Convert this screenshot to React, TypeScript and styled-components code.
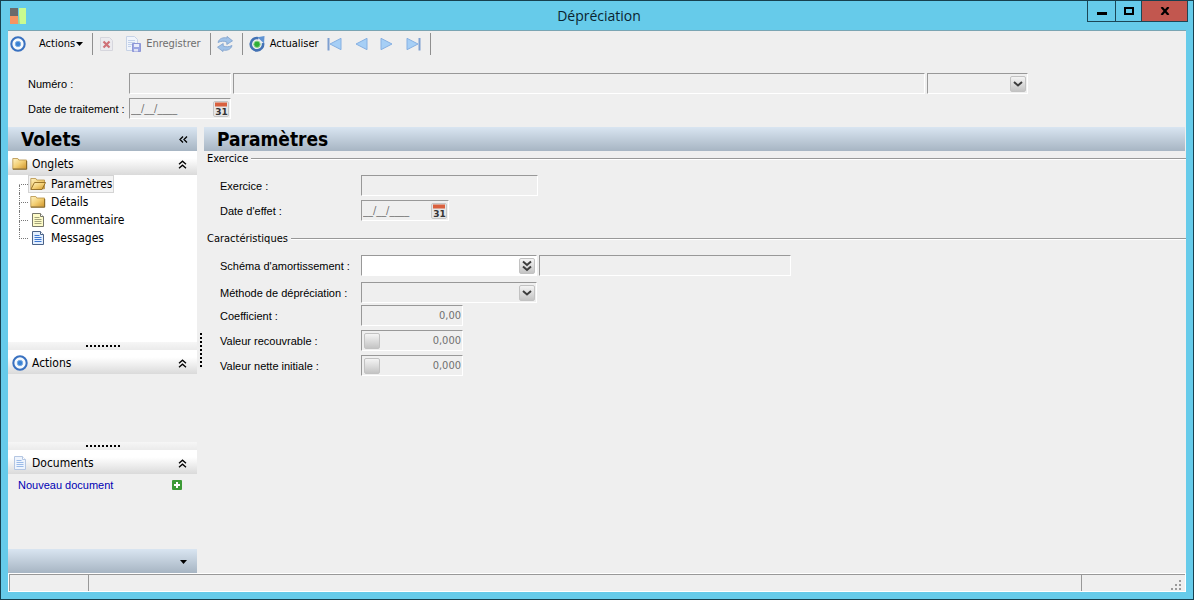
import React from "react";
import styled, { createGlobalStyle, css } from "styled-components";

const ui = `"DejaVu Sans Condensed", "Noto Sans", sans-serif`;
const form = `"Liberation Sans", Arial, sans-serif`;

const GlobalStyle = createGlobalStyle`
  *, *::before, *::after { box-sizing: border-box; }
  body { margin: 0; background: #66cbea; color: #000; font: 11px/16px ${form}; }
  button, input, select { font: inherit; color: inherit; margin: 0; padding: 0; border: 0; background: none; border-radius: 0; }
  svg { display: block; flex: none; }
  ul { list-style: none; margin: 0; padding: 0; }
  h1, h2, h3 { margin: 0; font-weight: normal; }
`;

const Window = styled.div`
  display: flex;
  flex-direction: column;
  min-height: 100vh;
  border: 1px solid #17404f;
  background: #66cbea;
`;

const TitleBar = styled.header`
  display: grid;
  grid-template-columns: 1fr auto 1fr;
  align-items: center;
  height: 29px;
  padding: 0 5px 0 9px;
`;

const WindowTitle = styled.h1`
  font: 14px/20px "Open Sans", "Noto Sans", sans-serif;
  color: #0a2430;
`;

const WindowButtons = styled.div`
  display: flex;
  align-self: start;
  justify-self: end;
`;

const WindowButton = styled.button<{ $width: number; $close?: boolean }>`
  display: grid;
  place-items: center;
  width: ${(p) => p.$width}px;
  height: 21px;
  border: solid #1b4656;
  border-width: 0 0 1px 1px;
  background: ${(p) => (p.$close ? "#c2574f" : "transparent")};
  &:last-child { border-right-width: 1px; }
`;

const Client = styled.div`
  display: flex;
  flex-direction: column;
  flex: 1;
  margin: 0 7px 7px;
  border-top: 1px solid #7aa5b3;
  background: #efefef;
`;

const Toolbar = styled.div`
  display: flex;
  align-items: center;
  height: 26px;
  font: 11px/16px ${ui};
`;

const ToolGroup = styled.div<{ $gap?: number }>`
  display: flex;
  align-items: center;
  gap: ${(p) => p.$gap ?? 10}px;
  height: 22px;
  padding: 0 9px 0 6px;
  border-right: 1px solid #8f8f8f;
  &:first-child { padding-left: 2px; }
`;

const Pager = styled.div`
  display: flex;
  gap: 10px;
`;

const ToolButton = styled.button`
  display: flex;
  align-items: center;
  gap: 5px;
  height: 20px;
  white-space: nowrap;
  &:disabled { color: #6d6d6d; }
`;

const MenuButton = styled(ToolButton)`
  gap: 1px;
  padding-left: 3px;
`;

const Heading = styled.div`
  display: grid;
  row-gap: 4px;
  padding: 16px 158px 8px 20px;
`;

const Body = styled.div`
  display: flex;
  flex: 1;
`;

const Row = styled.div<{ $label: number }>`
  display: grid;
  grid-template-columns: ${(p) => p.$label}px minmax(0, 1fr);
  align-items: center;
`;

const Fields = styled.div`
  display: flex;
  gap: 2px;
`;

const Box = styled.div<{ $width?: number; $open?: boolean }>`
  display: grid;
  grid-template-columns: auto minmax(0, 1fr) auto;
  align-items: center;
  height: 21px;
  ${(p) => (p.$width ? css`width: ${p.$width}px;` : css`flex: 1; min-width: 0;`)}
  border: 1px solid;
  border-color: #989898 #fff #fff #989898;
  background: ${(p) => (p.$open ? "#fff" : "#efefef")};
`;

const TextInput = styled.input<{ $number?: boolean }>`
  grid-row: 1;
  grid-column: 2;
  width: 100%;
  height: 19px;
  padding: 0 1px;
  outline: none;
  color: #6f6f6f;
  text-align: ${(p) => (p.$number ? "right" : "left")};
  font-family: ${ui};
`;

const Select = styled.select`
  grid-row: 1;
  grid-column: 1 / -1;
  width: 100%;
  height: 19px;
  appearance: none;
  outline: none;
`;

const chip = css`
  display: grid;
  place-items: center;
  width: 16px;
  height: 16px;
  border: 1px solid #c2c2c2;
  border-radius: 2px;
  background: linear-gradient(#f4f4f4, #c4c4c4);
`;

const SelectArrow = styled.span`
  ${chip}
  grid-row: 1;
  grid-column: 3;
  margin-right: 1px;
  pointer-events: none;
`;

const ChipButton = styled.button<{ $end?: boolean }>`
  ${chip}
  grid-row: 1;
  grid-column: ${(p) => (p.$end ? 3 : 1)};
  margin: ${(p) => (p.$end ? "0 1px 0 0" : "0 0 0 2px")};
`;

const CalendarButton = styled.button`
  grid-row: 1;
  grid-column: 3;
  margin-right: 1px;
`;

const Side = styled.aside`
  display: flex;
  flex-direction: column;
  width: 189px;
  font: 12px/18px ${ui};
`;

const bar = css`
  display: flex;
  align-items: center;
  flex: none;
  height: 24px;
  background: linear-gradient(#d9e5f1, #a7b5c3);
`;

const Banner = styled.div`
  ${bar}
  justify-content: space-between;
  padding: 0 9px 0 13px;
`;

const BannerTitle = styled.h2`
  font: bold 19px/24px ${ui};
`;

const SideFooter = styled.div`
  ${bar}
  justify-content: flex-end;
  padding: 2px 10px 0 0;
`;

const PanelHeader = styled.div`
  display: flex;
  align-items: center;
  flex: none;
  gap: 4px;
  height: 24px;
  padding: 2px 10px 0 4px;
  background: linear-gradient(#fff 30%, #dadada);
`;

const PanelTitle = styled.h3`
  flex: 1;
  font-size: 12px;
`;

const PanelBody = styled.div<{ $height: number; $tree?: boolean }>`
  min-height: ${(p) => p.$height}px;
  ${(p) => p.$tree && css`flex: 1; background: #fff;`}
`;

const Grip = styled.div`
  display: grid;
  place-items: center;
  flex: none;
  height: 8px;
  background: linear-gradient(#f6f6f6, #ebebeb);
`;

const SideSplitter = styled.div`
  display: flex;
  justify-content: center;
  align-items: center;
  width: 7px;
`;

const Tree = styled.ul`
  padding-left: 11px;
`;

const Branch = styled.span`
  flex: none;
  width: 9px;
  &::before, &::after {
    content: "";
    display: block;
    border-left: 1px dotted #777;
  }
  &::before { height: 10px; border-bottom: 1px dotted #777; }
  &::after { height: 8px; }
`;

const TreeItem = styled.li`
  display: flex;
  height: 18px;
  &:first-child ${Branch}::before { border-left-color: transparent; }
  &:last-child ${Branch}::after { border-left-color: transparent; }
`;

const TreeButton = styled.button<{ $selected?: boolean }>`
  display: flex;
  align-items: center;
  gap: 5px;
  height: 18px;
  padding: 0 1px;
  border: 1px solid ${(p) => (p.$selected ? "#d4d4d4" : "transparent")};
  background: ${(p) => (p.$selected ? "#f3f3f3" : "transparent")};
`;

const DocumentRow = styled.div`
  display: flex;
  align-items: center;
  justify-content: space-between;
  height: 22px;
  padding: 0 15px 0 10px;
  font: 11px/16px ${form};
`;

const Link = styled.a`
  color: #0000b4;
  text-decoration: none;
`;

const Main = styled.main`
  flex: 1;
  min-width: 0;
`;

const MainBanner = styled(Banner)`
  margin-right: 1px;
`;

const Group = styled.section`
  padding-bottom: 10px;
`;

const GroupTitle = styled.h3`
  display: flex;
  align-items: center;
  gap: 3px;
  height: 16px;
  padding-left: 3px;
  font: 11px/16px ${ui};
  &::after {
    content: "";
    flex: 1;
    height: 2px;
    border-top: 1px solid #989898;
    background: #fff;
  }
`;

const GroupBody = styled.div`
  display: grid;
  row-gap: 2px;
  padding: 8px 0 0 16px;
`;

const Rows = styled.div<{ $gap: number }>`
  display: grid;
  row-gap: ${(p) => p.$gap}px;
`;

const StatusBar = styled.footer`
  display: grid;
  grid-template-columns: 79px 1fr 104px;
  height: 19px;
  border: 1px solid #fff;
`;

const StatusCell = styled.div`
  display: flex;
  align-items: flex-end;
  justify-content: flex-end;
  padding: 0 4px 1px 0;
  border: solid #989898;
  border-width: 1px 0 0 1px;
`;

const TargetIcon = () => (
  <svg width="16" height="16" viewBox="0 0 17 17">
    <circle cx="8.5" cy="8.5" r="7.1" fill="#f6fafd" stroke="#3971c0" strokeWidth="2.2" />
    <circle cx="8.5" cy="8.5" r="2.9" fill="#3a82d4" stroke="#7eaee2" />
  </svg>
);

const AppIcon = () => (
  <svg width="16" height="16" viewBox="0 0 16 16">
    <path fill="#6b6b6b" d="M0 0h8v8H0z" />
    <path fill="#f79461" d="M0 8h8v8H0z" />
    <path fill="#c9fb90" d="M9 0h7v16H9z" />
    <path fill="#a3d68c" d="M9 6l1 10H8z" />
  </svg>
);

const Caret = () => (
  <svg width="7" height="4" viewBox="0 0 7 4">
    <path d="M0 0h7L3.5 4z" />
  </svg>
);

const DeleteIcon = () => (
  <svg width="16" height="16" viewBox="0 0 16 16">
    <path d="M1.5 1.5h9l3 3v10h-12z" fill="#ebebef" stroke="#d6d6dd" />
    <path d="M4.5 5.5l6 6M10.5 5.5l-6 6" stroke="#cf7278" strokeWidth="2.2" />
  </svg>
);

const SaveIcon = () => (
  <svg width="16" height="16" viewBox="0 0 16 16">
    <path d="M1.5.5h8l3 3v11h-11z" fill="#f0f4fb" stroke="#c6d2e6" />
    <path d="M3 4.5h7M3 6.5h7M3 8.5h4M3 10.5h3" stroke="#c2d1ea" />
    <path d="M7.5 7.5h8v8h-8z" fill="#9ba6e2" stroke="#8d96d6" />
    <path d="M9 8h5v3H9z" fill="#e9ecfa" />
    <path d="M9 13h4v2.500H9z" fill="#dfe2f5" />
  </svg>
);

const SyncIcon = () => (
  <svg width="16" height="16" viewBox="0 0 16 16" fill="#a0c2e8" stroke="#7d9fcb" strokeWidth=".8" strokeLinejoin="round">
    <path d="M1 6.500C2 2.500 6 1 10 2V.4l5.500 4.400L9.800 8.500V6C7 4.800 4 5 1 6.500z" />
    <path d="M15 9.500c-1 4-5 5.500-9 4.500v1.600L.5 11.200l5.700-3.700V10C9 11.200 12 11 15 9.500z" />
  </svg>
);

const ReloadIcon = () => (
  <svg width="16" height="16" viewBox="0 0 16 16">
    <path d="M9.500 2.200A6.200 6.200 0 1 0 14 7" fill="none" stroke="#4372b4" strokeWidth="2.600" />
    <path d="M8.500 1.200L15.500 0l-.5 7.500z" fill="#5f93d3" />
    <circle cx="8" cy="8.300" r="3.200" fill="#2fae36" stroke="#8fd58f" />
  </svg>
);

const NavIcon = ({ flip, end }: { flip?: boolean; end?: boolean }) => (
  <svg width="16" height="16" viewBox="0 0 16 16">
    <g transform={flip ? "matrix(-1 0 0 1 16 0)" : undefined}>
      <path d="M2 2.300v11.400L13 8z" fill="#a6cff6" stroke="#86b0e2" strokeLinejoin="round" />
      {end && <path d="M14.500 2v12.500" stroke="#7d9fd0" strokeWidth="2" />}
    </g>
  </svg>
);

const CalendarIcon = () => (
  <svg width="16" height="16" viewBox="0 0 16 16">
    <rect x=".5" y=".5" width="15" height="15" rx="1.5" fill="#e6e6e6" stroke="#c6c6c6" />
    <path d="M2 1.500h12v4H2z" fill="#d9613f" />
    <text x="8.500" y="13.500" textAnchor="middle" fontFamily="DejaVu Sans" fontWeight="bold" fontSize="9" fill="#333">31</text>
  </svg>
);

const Chevron = ({ double }: { double?: boolean }) => (
  <svg width="10" height="12" viewBox="0 0 10 12" fill="none" stroke="#3c3c3c" strokeWidth="2">
    {double ? <path d="M1 1.500l4 3.500 4-3.500M1 6.500L5 10l4-3.500" /> : <path d="M1 4l4 3.500L9 4" />}
  </svg>
);

const CollapseIcon = ({ left }: { left?: boolean }) => (
  <svg width="9" height="9" viewBox="0 0 9 9" fill="none" stroke="#000" strokeWidth="1.300">
    {left ? <path d="M4 1.500L1 4.500l3 3M8 1.500L5 4.500l3 3" /> : <path d="M1 4.200l3.500-3 3.500 3M1 8.200l3.500-3 3.500 3" />}
  </svg>
);

const FolderIcon = ({ open }: { open?: boolean }) => (
  <svg width="16" height="16" viewBox="0 0 16 16" strokeLinejoin="round">
    <defs>
      <linearGradient id="folder" x2="1" y2="1">
        <stop stopColor="#fff3c4" />
        <stop offset=".5" stopColor="#f3cf74" />
        <stop offset="1" stopColor="#cf942a" />
      </linearGradient>
    </defs>
    <path d="M.8 12.800V2.500h5l1 1.500h7.700v8.800z" fill="url(#folder)" stroke="#b58f45" strokeWidth=".8" />
    {open && <path d="M4.500 6.500h11l-3.500 7H.8z" fill="url(#folder)" stroke="#8f6a22" strokeWidth=".9" />}
    {!open && <path d="M.8 13.200h13.900V5" fill="none" stroke="#80601f" />}
  </svg>
);

const PageIcon = ({ fill, line, edge }: { fill: string; line: string; edge: string }) => (
  <svg width="16" height="16" viewBox="0 0 16 16">
    <path d="M2.500 1.500h8l3 3v10h-11z" fill={fill} stroke={edge} />
    <path d="M10.500 1.500v3h3" fill="#fff" stroke={edge} />
    <path d="M4.500 5.500h5M4.500 7.500h7M4.500 9.500h7M4.500 11.500h7" stroke={line} />
  </svg>
);

const PlusIcon = () => (
  <svg width="10" height="10" viewBox="0 0 10 10">
    <rect width="10" height="10" rx="1" fill="#3c9a36" />
    <path d="M5 2v6M2 5h6" stroke="#fff" strokeWidth="2" />
  </svg>
);

const Dots = ({ vertical }: { vertical?: boolean }) => (
  <svg width={vertical ? 2 : 34} height={vertical ? 34 : 2} shapeRendering="crispEdges">
    {Array.from({ length: 9 }, (_, i) => (
      <rect key={i} x={vertical ? 0 : i * 4} y={vertical ? i * 4 : 0} width="2" height="2" />
    ))}
  </svg>
);

const ResizeGrip = () => (
  <svg width="10" height="10" fill="#9a9a9a">
    <path d="M8 0h2v2H8zM8 4h2v2H8zM4 4h2v2H4zM8 8h2v2H8zM4 8h2v2H4zM0 8h2v2H0z" />
  </svg>
);

const DateField = ({ id, width }: { id: string; width: number }) => (
  <Box $width={width}>
    <TextInput id={id} defaultValue="__/__/____" />
    <CalendarButton aria-label="Calendrier"><CalendarIcon /></CalendarButton>
  </Box>
);

const SelectField = ({ id, width, label }: { id: string; width: number; label?: string }) => (
  <Box $width={width}>
    <Select id={id} aria-label={label}><option value="" /></Select>
    <SelectArrow><Chevron /></SelectArrow>
  </Box>
);

const NumberField = ({ id, value, pick }: { id: string; value: string; pick?: boolean }) => (
  <Box $width={102}>
    {pick && <ChipButton aria-label="Détail de la valeur" />}
    <TextInput id={id} $number defaultValue={value} />
  </Box>
);

const FormRow = ({ id, text, label = 141, children }: { id: string; text: string; label?: number; children: React.ReactNode }) => (
  <Row $label={label}>
    <label htmlFor={id}>{text}</label>
    <Fields>{children}</Fields>
  </Row>
);

const tabs = [
  { name: "Paramètres", icon: <FolderIcon open /> },
  { name: "Détails", icon: <FolderIcon /> },
  { name: "Commentaire", icon: <PageIcon fill="#fdfbc8" line="#a3a37c" edge="#77776a" /> },
  { name: "Messages", icon: <PageIcon fill="#e3efff" line="#3f78d0" edge="#4a6288" /> },
];

export default function App() {
  return (
    <Window>
      <GlobalStyle />
      <TitleBar>
        <AppIcon />
        <WindowTitle>Dépréciation</WindowTitle>
        <WindowButtons>
          <WindowButton $width={28} aria-label="Réduire">
            <svg width="10" height="10"><path d="M0 6h10v3H0z" /></svg>
          </WindowButton>
          <WindowButton $width={26} aria-label="Agrandir">
            <svg width="10" height="8"><path d="M1 1h8v6H1z" fill="none" stroke="#000" strokeWidth="2" /></svg>
          </WindowButton>
          <WindowButton $width={47} $close aria-label="Fermer">
            <svg width="10" height="8"><path d="M1.500 0l7 8M8.500 0l-7 8" stroke="#000" strokeWidth="2.200" /></svg>
          </WindowButton>
        </WindowButtons>
      </TitleBar>
      <Client>
        <Toolbar role="toolbar">
          <ToolGroup>
            <TargetIcon />
            <MenuButton>Actions<Caret /></MenuButton>
          </ToolGroup>
          <ToolGroup>
            <ToolButton disabled aria-label="Supprimer"><DeleteIcon /></ToolButton>
            <ToolButton disabled><SaveIcon />Enregistrer</ToolButton>
          </ToolGroup>
          <ToolGroup>
            <ToolButton disabled aria-label="Synchroniser"><SyncIcon /></ToolButton>
          </ToolGroup>
          <ToolGroup $gap={8}>
            <ToolButton><ReloadIcon />Actualiser</ToolButton>
            <Pager>
              <ToolButton disabled aria-label="Premier"><NavIcon flip end /></ToolButton>
              <ToolButton disabled aria-label="Précédent"><NavIcon flip /></ToolButton>
              <ToolButton disabled aria-label="Suivant"><NavIcon /></ToolButton>
              <ToolButton disabled aria-label="Dernier"><NavIcon end /></ToolButton>
            </Pager>
          </ToolGroup>
        </Toolbar>
        <Heading>
          <FormRow id="numero" text="Numéro :" label={101}>
            <Box $width={102}><TextInput id="numero" /></Box>
            <Box><TextInput aria-label="Libellé" /></Box>
            <SelectField id="etat" width={101} label="État" />
          </FormRow>
          <FormRow id="traitement" text="Date de traitement :" label={101}>
            <DateField id="traitement" width={102} />
          </FormRow>
        </Heading>
        <Body>
          <Side>
            <Banner>
              <BannerTitle>Volets</BannerTitle>
              <button aria-label="Replier les volets"><CollapseIcon left /></button>
            </Banner>
            <PanelHeader>
              <FolderIcon />
              <PanelTitle>Onglets</PanelTitle>
              <button aria-label="Replier les onglets"><CollapseIcon /></button>
            </PanelHeader>
            <PanelBody $height={167} $tree>
              <Tree>
                {tabs.map((tab, i) => (
                  <TreeItem key={tab.name}>
                    <Branch />
                    <TreeButton $selected={i === 0}>{tab.icon}{tab.name}</TreeButton>
                  </TreeItem>
                ))}
              </Tree>
            </PanelBody>
            <Grip><Dots /></Grip>
            <PanelHeader>
              <TargetIcon />
              <PanelTitle>Actions</PanelTitle>
              <button aria-label="Replier les actions"><CollapseIcon /></button>
            </PanelHeader>
            <PanelBody $height={68} />
            <Grip><Dots /></Grip>
            <PanelHeader>
              <PageIcon fill="#eef4fd" line="#9bbbe8" edge="#b4c6e2" />
              <PanelTitle>Documents</PanelTitle>
              <button aria-label="Replier les documents"><CollapseIcon /></button>
            </PanelHeader>
            <PanelBody $height={75}>
              <DocumentRow>
                <Link href="#nouveau">Nouveau document</Link>
                <button aria-label="Ajouter"><PlusIcon /></button>
              </DocumentRow>
            </PanelBody>
            <SideFooter>
              <button aria-label="Options"><Caret /></button>
            </SideFooter>
          </Side>
          <SideSplitter><Dots vertical /></SideSplitter>
          <Main>
            <MainBanner>
              <BannerTitle>Paramètres</BannerTitle>
            </MainBanner>
            <Group>
              <GroupTitle>Exercice</GroupTitle>
              <GroupBody>
                <Rows $gap={4}>
                  <FormRow id="exercice" text="Exercice :">
                    <Box $width={177}><TextInput id="exercice" /></Box>
                  </FormRow>
                  <FormRow id="effet" text="Date d'effet :">
                    <DateField id="effet" width={88} />
                  </FormRow>
                </Rows>
              </GroupBody>
            </Group>
            <Group>
              <GroupTitle>Caractéristiques</GroupTitle>
              <GroupBody>
                <Rows $gap={6}>
                  <FormRow id="schema" text="Schéma d'amortissement :">
                    <Box $width={176} $open>
                      <TextInput id="schema" />
                      <ChipButton $end aria-label="Rechercher un schéma"><Chevron double /></ChipButton>
                    </Box>
                    <Box $width={252}><TextInput aria-label="Libellé du schéma" /></Box>
                  </FormRow>
                  <FormRow id="methode" text="Méthode de dépréciation :">
                    <SelectField id="methode" width={176} />
                  </FormRow>
                </Rows>
                <Rows $gap={4}>
                  <FormRow id="coefficient" text="Coefficient :">
                    <NumberField id="coefficient" value="0,00" />
                  </FormRow>
                  <FormRow id="recouvrable" text="Valeur recouvrable :">
                    <NumberField id="recouvrable" value="0,000" pick />
                  </FormRow>
                  <FormRow id="nette" text="Valeur nette initiale :">
                    <NumberField id="nette" value="0,000" pick />
                  </FormRow>
                </Rows>
              </GroupBody>
            </Group>
          </Main>
        </Body>
        <StatusBar>
          <StatusCell />
          <StatusCell />
          <StatusCell><ResizeGrip /></StatusCell>
        </StatusBar>
      </Client>
    </Window>
  );
}
